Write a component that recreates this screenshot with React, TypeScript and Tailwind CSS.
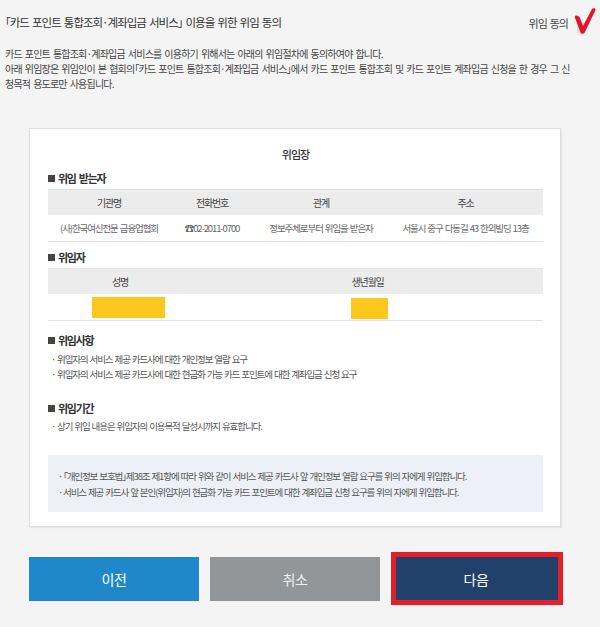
import React from 'react';

const cols1 = [
  { label: '기관명', value: '(사)한국여신전문 금융업협회', w: 'w-[122px]' },
  { label: '전화번호', value: '☎02-2011-0700', w: 'w-[84px]' },
  { label: '관계', value: '정보주체로부터 위임을 받은자', w: 'w-[134px]' },
  { label: '주소', value: '서울시 중구 다동길 43 한외빌딩 13층', w: 'w-[155px]' },
];

// corner brackets set proportional so they sit tight like the original font
const Open = () => <span className="[font-feature-settings:'palt']">「</span>;
const Close = () => <span className="[font-feature-settings:'palt']">」</span>;

const SectionTitle = ({ children, className = '' }: { children: React.ReactNode; className?: string }) => (
  <div className={`flex items-center h-[16px] text-[11px] font-bold text-[#333] tracking-[-1.3px] [word-spacing:2px] ${className}`}>
    <span className="inline-block w-[7px] h-[7px] bg-[#444] mr-[3px]" />
    <span>{children}</span>
  </div>
);

const Bullet = ({ children }: { children: React.ReactNode }) => (
  <div className="flex h-[15px] items-center pl-[3px] text-[9.5px] text-[#555] tracking-[-1.1px] [word-spacing:1px]">
    <span className="w-[6px]">·</span>
    <span>{children}</span>
  </div>
);

const CheckMark = () => (
  <svg width="24" height="28" viewBox="0 0 24 28" className="ml-[5px] -mt-[5px]">
    <rect x="4" y="15" width="7" height="11" rx="1" fill="#dcdcdc" />
    <path
      d="M2 9 C4 8 6 9 7 11 L10 19 L19 2 C20 0.5 23 1 22.5 3 L12 25 C11 27 8 27.5 7.5 25.5 L2.5 12 C2 11 1.5 10 2 9 Z"
      fill="#e2152b"
    />
  </svg>
);

export default function App() {
  return (
    <div className="min-h-[627px] w-full bg-[#f4f4f4] font-['Noto_Sans_CJK_KR','Noto_Sans',sans-serif]">
      {/* header */}
      <div className="flex items-center justify-between h-[46px] pl-[5px] pr-[3px]">
        <h1 className="text-[11.5px] text-[#333] tracking-[-1px] [word-spacing:1.5px]">
          <Open />카드 포인트 통합조회·계좌입금 서비스<Close /> 이용을 위한 위임 동의
        </h1>
        <div className="flex items-center">
          <span className="text-[11px] text-[#444] tracking-[-1px] [word-spacing:1.5px]">위임 동의</span>
          <CheckMark />
        </div>
      </div>

      <p className="pl-[5px] text-[10px] leading-[15px] text-[#444] tracking-[-0.8px] [word-spacing:1.5px] whitespace-nowrap">
        카드 포인트 통합조회·계좌입금 서비스를 이용하기 위해서는 아래의 위임절차에 동의하여야 합니다.
        <br />
        아래 위임장은 위임인이 본 협회의<Open />카드 포인트 통합조회·계좌입금 서비스<Close />에서 카드 포인트 통합조회 및 카드 포인트 계좌입금 신청을 한 경우 그 신
        <br />
        청목적 용도로만 사용됩니다.
      </p>

      {/* card */}
      <div className="ml-[29px] mt-[37px] w-[532px] bg-white border border-[#dedede] shadow-[1px_1px_1px_rgba(0,0,0,0.06)] pl-[18px] pr-[17px] pt-[17px] pb-[14px]">
        <div className="h-[16px] flex items-center justify-center text-[11px] font-medium text-[#333] tracking-[-1px]">
          위임장
        </div>

        <SectionTitle className="mt-[8px]">위임 받는자</SectionTitle>
        <div className="mt-[3px]">
          <div className="flex h-[26px] bg-[#ececec] border-t border-[#e2e2e2]">
            {cols1.map((c) => (
              <div key={c.label} className={`${c.w} flex items-center justify-center text-[10px] text-[#444] tracking-[-1.2px]`}>
                {c.label}
              </div>
            ))}
          </div>
          <div className="flex h-[27px] border-b border-[#e2e2e2]">
            {cols1.map((c) => (
              <div key={c.label} className={`${c.w} flex items-center justify-center text-[9.5px] text-[#666] tracking-[-1.1px] [word-spacing:1px] whitespace-nowrap`}>
                {c.value}
              </div>
            ))}
          </div>
        </div>

        <SectionTitle className="mt-[7px]">위임자</SectionTitle>
        <div className="mt-[3px]">
          <div className="flex h-[26px] bg-[#ececec] border-t border-[#e2e2e2] text-[10px] text-[#444] tracking-[-1.2px]">
            <div className="w-[144px] flex items-center justify-center">성명</div>
            <div className="w-[351px] flex items-center justify-center">생년월일</div>
          </div>
          <div className="flex h-[27px] border-b border-[#e2e2e2]">
            <div className="w-[144px] pl-[44px] pt-[3px]">
              <div className="w-[73px] h-[21px] bg-[#fdc81d]" />
            </div>
            <div className="w-[351px] pl-[159px] pt-[4px]">
              <div className="w-[37px] h-[21px] bg-[#fdc81d]" />
            </div>
          </div>
        </div>

        <SectionTitle className="mt-[11px]">위임사항</SectionTitle>
        <div className="mt-[4px]">
          <Bullet>위임자의 서비스 제공 카드사에 대한 개인정보 열람 요구</Bullet>
          <Bullet>위임자의 서비스 제공 카드사에 대한 현금화 가능 카드 포인트에 대한 계좌입금 신청 요구</Bullet>
        </div>

        <SectionTitle className="mt-[18px]">위임기간</SectionTitle>
        <div className="mt-[3px]">
          <Bullet>상기 위임 내용은 위임자의 이용목적 달성시까지 유효합니다.</Bullet>
        </div>

        <div className="mt-[21px] h-[57px] bg-[#edf1f7] pl-[9px] pt-[13px] text-[9.5px] leading-[16px] text-[#555] tracking-[-1.1px] [word-spacing:1px]">
          <div className="flex">
            <span className="w-[6px] pl-[1px]">·</span>
            <span>
              <Open />개인정보 보호법<Close />제38조 제1항에 따라 위와 같이 서비스 제공 카드사 앞 개인정보 열람 요구를 위의 자에게 위임합니다.
            </span>
          </div>
          <div className="flex">
            <span className="w-[6px] pl-[1px]">·</span>
            <span>서비스 제공 카드사 앞 본인(위임자)의 현금화 가능 카드 포인트에 대한 계좌입금 신청 요구를 위의 자에게 위임합니다.</span>
          </div>
        </div>
      </div>

      {/* buttons */}
      <div className="flex gap-[11px] ml-[29px] mt-[30px]">
        <button className="w-[170px] h-[44px] bg-[#1f88cb] text-white text-[14px] tracking-[-0.5px]">이전</button>
        <button className="w-[170px] h-[44px] bg-[#939699] text-[#eef0f2] text-[14px] tracking-[-0.5px]">취소</button>
        <div className="relative w-[170px] h-[44px]">
          <button className="w-full h-full bg-[#21416a] text-white text-[14px] tracking-[-0.5px]">다음</button>
          <div className="absolute -top-[5px] -bottom-[4px] left-0 -right-[2px] border-[5px] border-[#e3202a] pointer-events-none" />
        </div>
      </div>
    </div>
  );
}
